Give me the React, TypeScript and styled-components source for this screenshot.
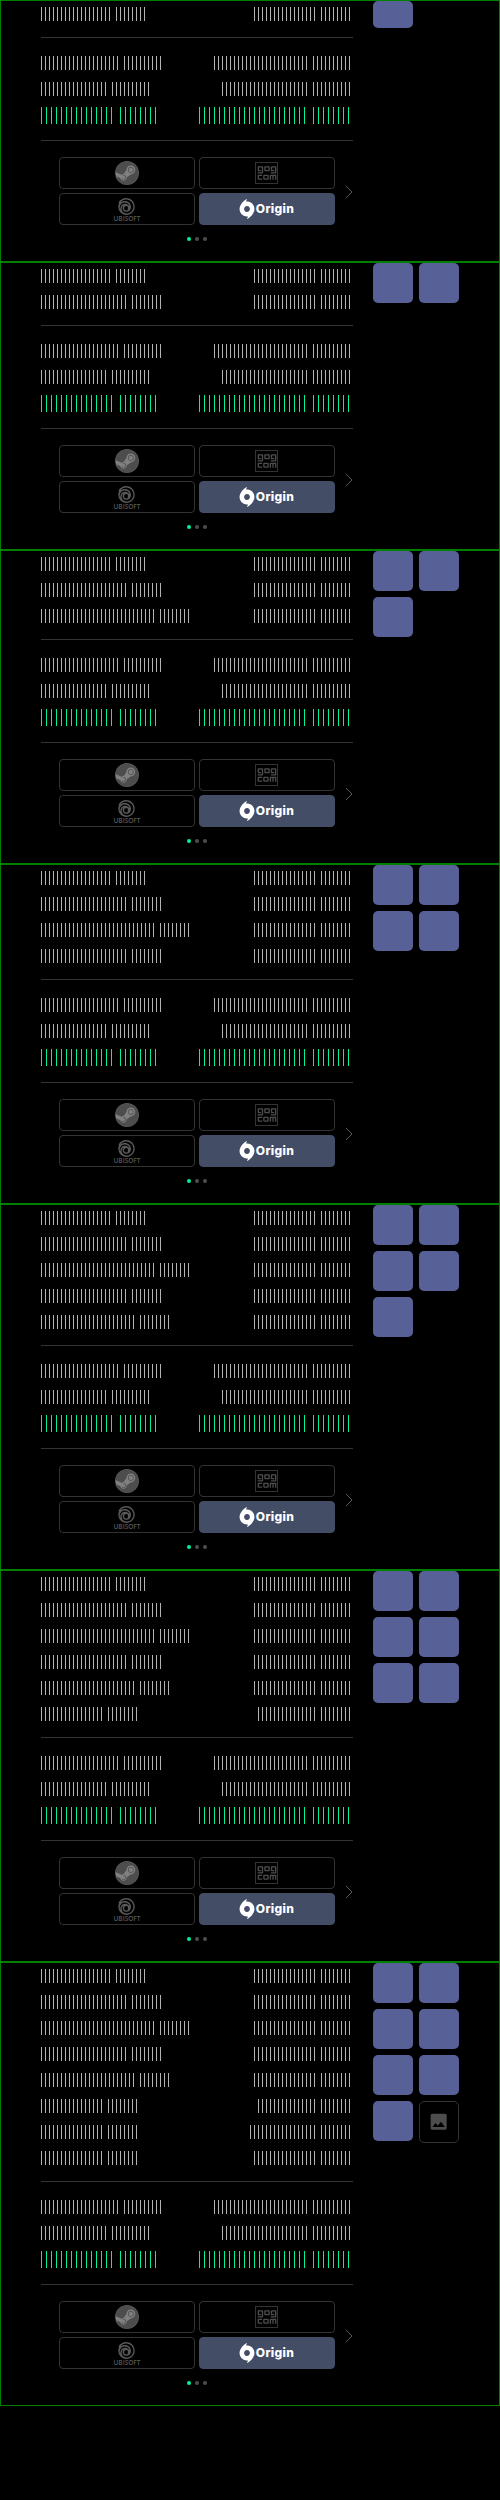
import React from "react";
import styled, { createGlobalStyle } from "styled-components";
import { FaSteam } from "react-icons/fa";
import { MdImage } from "react-icons/md";
import { SiGogdotcom, SiOrigin, SiUbisoft } from "react-icons/si";

const GlobalStyle = createGlobalStyle`
  *, *::before, *::after { box-sizing: border-box; }
  body { margin: 0; background: #000; }
`;

const Page = styled.main`
  display: flex;
  flex-direction: column;
  width: 500px;
  min-height: 2500px;
  background: #000;
`;

const Case = styled.section`
  display: flex;
  gap: 20px;
  padding: 0 0 20px 40px;
  border: 1px solid #008000;
`;

const Summary = styled.div`
  width: 312px;
`;

const Lines = styled.div`
  padding-bottom: 10px;
  border-bottom: 1px solid #333;
`;

const Totals = styled(Lines)`
  padding-top: 12px;
`;

const Line = styled.div<{ $tall?: boolean }>`
  display: flex;
  justify-content: space-between;
  align-items: center;
  height: ${(p) => (p.$tall ? 28 : 26)}px;
  padding-bottom: ${(p) => (p.$tall ? 1 : 0)}px;
`;

const Words = styled.div<{ $large?: boolean }>`
  display: flex;
  gap: ${(p) => (p.$large ? 4 : 3)}px;
`;

const Word = styled.span<{ $count: number; $large?: boolean }>`
  width: ${(p) => p.$count * (p.$large ? 5 : 4)}px;
  height: ${(p) => (p.$large ? 17 : 14)}px;
  background: repeating-linear-gradient(
    to right,
    ${(p) => (p.$large ? "#00f0a0" : "#b3b3b3")} 0 1px,
    transparent 1px ${(p) => (p.$large ? 5 : 4)}px
  );
`;

const Stores = styled.div`
  display: grid;
  grid-template-columns: 18px 276px 18px;
  align-items: center;
  padding-top: 16px;
`;

const StoreGrid = styled.div`
  grid-column: 2;
  display: grid;
  grid-template-columns: 136px 136px;
  grid-auto-rows: 32px;
  gap: 4px;
`;

const Store = styled.div<{ $active?: boolean }>`
  display: flex;
  align-items: center;
  justify-content: center;
  border: 1px solid ${(p) => (p.$active ? "#434d66" : "#333")};
  border-radius: 4px;
  background: ${(p) => (p.$active ? "#434d66" : "transparent")};
  color: #4d4d4d;
`;

const SteamDisc = styled.span`
  display: flex;
  border-radius: 50%;
  background: radial-gradient(circle, #808080 11px, #4d4d4d 11.8px);
`;

const GogFrame = styled.span`
  display: flex;
  align-items: center;
  justify-content: center;
  width: 23px;
  height: 22px;
  margin-right: 1px;
  border: 1px solid #333;
  overflow: hidden;
  svg {
    flex: none;
    width: 24px;
    height: 22px;
  }
`;

const UbisoftMark = styled.span`
  display: flex;
  flex-direction: column;
  align-items: center;
  gap: 1px;
  padding-top: 1px;
  color: #595959;
  font: 600 6.5px/6px "Open Sans", sans-serif;
`;

const OriginMark = styled.span`
  display: flex;
  align-items: center;
  margin-right: 3px;
  color: #fff;
  font: 800 12px/16px Inter, sans-serif;
  letter-spacing: 0.3px;
  svg {
    margin-right: -1px;
  }
`;

const Next = styled.svg`
  justify-self: end;
  width: 8px;
  height: 14px;
  margin-top: 2px;
`;

const Dots = styled.div`
  display: flex;
  justify-content: center;
  gap: 4px;
  padding-top: 12px;
`;

const Dot = styled.span<{ $active?: boolean }>`
  width: 4px;
  height: 4px;
  border-radius: 50%;
  background: ${(p) => (p.$active ? "#00f0a0" : "#4d4d4d")};
`;

const Tiles = styled.div`
  display: grid;
  grid-template-columns: 40px 40px;
  gap: 6px;
  align-content: start;
  height: 0;
`;

const Tile = styled.div<{ $short?: boolean }>`
  height: ${(p) => (p.$short ? 27 : 40)}px;
  border-radius: 5px;
  background: #576198;
`;

const MoreTile = styled.div`
  display: flex;
  align-items: center;
  justify-content: center;
  height: 42px;
  border: 1px solid #333;
  border-radius: 5px;
  color: #4d4d4d;
`;

type Counts = [number, number];
type Entry = { label: Counts; value: Counts };

const items: Entry[] = [
  { label: [18, 8], value: [16, 8] },
  { label: [22, 8], value: [16, 8] },
  { label: [29, 8], value: [16, 8] },
  { label: [22, 8], value: [16, 8] },
  { label: [24, 8], value: [16, 8] },
  { label: [16, 8], value: [15, 8] },
  { label: [16, 8], value: [17, 8] },
  { label: [16, 8], value: [16, 8] },
];

const totals: Entry[] = [
  { label: [20, 10], value: [24, 10] },
  { label: [17, 10], value: [22, 10] },
];

const grandTotal: Entry = { label: [15, 8], value: [22, 8] };

function Phrase({ counts, large }: { counts: Counts; large?: boolean }) {
  return (
    <Words $large={large}>
      {counts.map((count, i) => (
        <Word key={i} $count={count} $large={large} />
      ))}
    </Words>
  );
}

function EntryLine({ entry, large }: { entry: Entry; large?: boolean }) {
  return (
    <Line $tall={large}>
      <Phrase counts={entry.label} large={large} />
      <Phrase counts={entry.value} large={large} />
    </Line>
  );
}

function Bundle({ count }: { count: number }) {
  const tiles = Math.min(count, 7);
  return (
    <Case>
      <Summary>
        <Lines>
          {items.slice(0, count).map((entry, i) => (
            <EntryLine key={i} entry={entry} />
          ))}
        </Lines>
        <Totals>
          {totals.map((entry, i) => (
            <EntryLine key={i} entry={entry} />
          ))}
          <EntryLine entry={grandTotal} large />
        </Totals>
        <Stores>
          <StoreGrid>
            <Store>
              <SteamDisc>
                <FaSteam size={24} />
              </SteamDisc>
            </Store>
            <Store>
              <GogFrame>
                <SiGogdotcom preserveAspectRatio="none" />
              </GogFrame>
            </Store>
            <Store>
              <UbisoftMark>
                <SiUbisoft size={17} />
                UBISOFT
              </UbisoftMark>
            </Store>
            <Store $active>
              <OriginMark>
                <SiOrigin size={20} />
                Origin
              </OriginMark>
            </Store>
          </StoreGrid>
          <Next viewBox="0 0 8 14" fill="none" stroke="#595959">
            <path d="M1 1l6 6-6 6" />
          </Next>
        </Stores>
        <Dots>
          <Dot $active />
          <Dot />
          <Dot />
        </Dots>
      </Summary>
      <Tiles>
        {Array.from({ length: tiles }, (_, i) => (
          <Tile key={i} $short={count === 1} />
        ))}
        {count > tiles && (
          <MoreTile>
            <MdImage size={21.33} />
          </MoreTile>
        )}
      </Tiles>
    </Case>
  );
}

export default function App() {
  return (
    <Page>
      <GlobalStyle />
      {[1, 2, 3, 4, 5, 6, 8].map((count) => (
        <Bundle key={count} count={count} />
      ))}
    </Page>
  );
}
